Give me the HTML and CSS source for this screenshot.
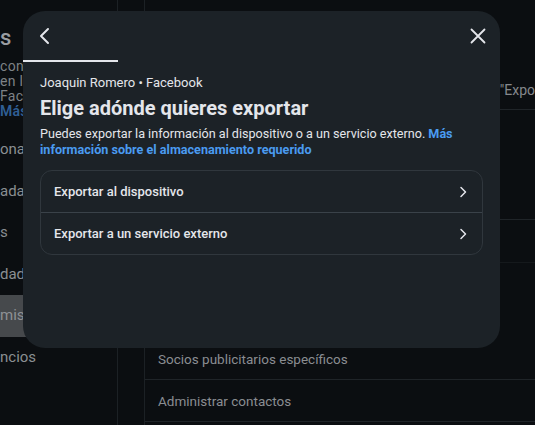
FILE: index.html
```html
<!DOCTYPE html>
<html lang="es">
<head>
<meta charset="utf-8">
<link rel="stylesheet" href="styles.css">
</head>
<body>
<div class="page">
  <aside class="sidebar">
    <div class="side-head">s</div>
    <div class="side-desc">
      <div>cone</div>
      <div>en l</div>
      <div>Facel</div>
      <div class="side-link">Más i</div>
    </div>
    <div class="side-item">onal</div>
    <div class="side-item">adas</div>
    <div class="side-item">s</div>
    <div class="side-item">dad</div>
    <div class="side-item active">miso</div>
    <div class="side-item">ncios</div>
  </aside>
  <div class="gutter"></div>
  <main class="main">
    <div class="main-row tall"><span class="quote">"Expo</span></div>
    <div class="main-row h110"></div>
    <div class="main-row h43 faint"></div>
    <div class="main-row h75 none"></div>
    <div class="main-row h42"><span>Socios publicitarios específicos</span></div>
    <div class="main-row h42"><span>Administrar contactos</span></div>
  </main>
</div>

<div class="modal">
  <div class="modal-top">
    <button class="icon-btn" aria-label="Atrás">
      <svg width="20" height="20" viewBox="0 0 20 20"><path d="M13 3 L6 10 L13 17" fill="none" stroke="#e4e6eb" stroke-width="2" stroke-linecap="round" stroke-linejoin="round"/></svg>
    </button>
    <button class="icon-btn" aria-label="Cerrar">
      <svg width="20" height="20" viewBox="0 0 20 20"><path d="M3.5 3.5 L16.5 16.5 M16.5 3.5 L3.5 16.5" fill="none" stroke="#e4e6eb" stroke-width="1.8" stroke-linecap="round"/></svg>
    </button>
  </div>
  <div class="tab-bar"></div>
  <div class="modal-body">
    <div class="account">Joaquin Romero • Facebook</div>
    <h1 class="title">Elige adónde quieres exportar</h1>
    <p class="desc">Puedes exportar la información al dispositivo o a un servicio externo. <span class="link">Más</span> <span class="link">información sobre el almacenamiento requerido</span></p>
    <div class="options">
      <div class="option">
        <span>Exportar al dispositivo</span>
        <svg width="10" height="12" viewBox="0 0 10 12"><path d="M3 1.5 L7.5 6 L3 10.5" fill="none" stroke="#e4e6eb" stroke-width="1.5" stroke-linecap="round" stroke-linejoin="round"/></svg>
      </div>
      <div class="option">
        <span>Exportar a un servicio externo</span>
        <svg width="10" height="12" viewBox="0 0 10 12"><path d="M3 1.5 L7.5 6 L3 10.5" fill="none" stroke="#e4e6eb" stroke-width="1.5" stroke-linecap="round" stroke-linejoin="round"/></svg>
      </div>
    </div>
  </div>
</div>
</body>
</html>
```

FILE: styles.css
```css
* { box-sizing: border-box; }
html, body {
  margin: 0;
  padding: 0;
  width: 535px;
  height: 425px;
  overflow: hidden;
  background: #0b0e11;
  font-family: "Roboto", "Liberation Sans", sans-serif;
  color: #e4e6eb;
}
.page {
  display: grid;
  grid-template-columns: 118px 27px 1fr;
  height: 425px;
}
.sidebar {
  border-right: 1px solid #1c2125;
  overflow: hidden;
  color: #8e9195;
  font-size: 15px;
}
.side-head {
  font-size: 22px;
  font-weight: 500;
  height: 58px;
  padding-top: 24px;
  line-height: 28px;
  color: #9a9da1;
}
.side-desc {
  font-size: 14px;
  line-height: 15px;
  padding-top: 1px;
  height: 71px;
  color: #7e8286;
  letter-spacing: 0.3px;
}
.side-link { color: #2f5f95; font-weight: 600; }
.side-item {
  height: 41.6px;
  line-height: 41.6px;
  font-size: 15px;
  color: #8a8e92;
}
.side-item.active {
  background: #46494c;
  color: #8e9195;
}
.gutter {
  border-right: 1px solid #1c2125;
}
.main {
  display: flex;
  flex-direction: column;
  color: #8a8d91;
  font-size: 13.5px;
}
.main-row {
  border-bottom: 1px solid #1f2428;
  padding-left: 13px;
  display: flex;
  align-items: center;
}
.main-row.tall {
  height: 110px;
  align-items: flex-end;
  padding-bottom: 11px;
  justify-content: flex-end;
}
.quote { color: #85888c; font-size: 14px; }
.main-row.h110 { height: 110px; }
.main-row.h43 { height: 43px; }
.main-row.faint { border-bottom-color: #15191c; }
.main-row.h75 { height: 75px; border-bottom: none; }
.main-row.h42 { height: 42px; }

.modal {
  position: absolute;
  left: 23px;
  top: 11px;
  width: 477px;
  height: 337px;
  background: #1c2227;
  border-radius: 22px;
  overflow: hidden;
}
.modal-top {
  height: 49px;
  display: flex;
  justify-content: space-between;
  align-items: center;
  padding: 0 12px 0 12px;
}
.icon-btn {
  background: none;
  border: none;
  padding: 0;
  width: 20px;
  height: 20px;
  display: flex;
  align-items: center;
  justify-content: center;
}
.tab-bar {
  width: 95px;
  height: 2px;
  background: #e4e6eb;
}
.modal-body {
  padding: 12px 17px 0 17px;
}
.account {
  font-size: 13px;
  line-height: 18px;
  color: #e4e6eb;
}
.title {
  margin: 3px 0 0 0;
  font-size: 20px;
  line-height: 26px;
  font-weight: 700;
  color: #e4e6eb;
}
.desc {
  margin: 5px 0 0 0;
  font-size: 12.6px;
  line-height: 16px;
  color: #e4e6eb;
}
.link {
  color: #4a9bf0;
  font-weight: 700;
}
.options {
  margin-top: 12px;
  border: 1px solid #30373d;
  border-radius: 12px;
}
.option {
  height: 41px;
  display: flex;
  align-items: center;
  justify-content: space-between;
  padding: 0 14px 0 13px;
  font-size: 13px;
  font-weight: 500;
  color: #e4e6eb;
}
.option + .option {
  height: 42px;
  border-top: 1px solid #3a4249;
}
```
